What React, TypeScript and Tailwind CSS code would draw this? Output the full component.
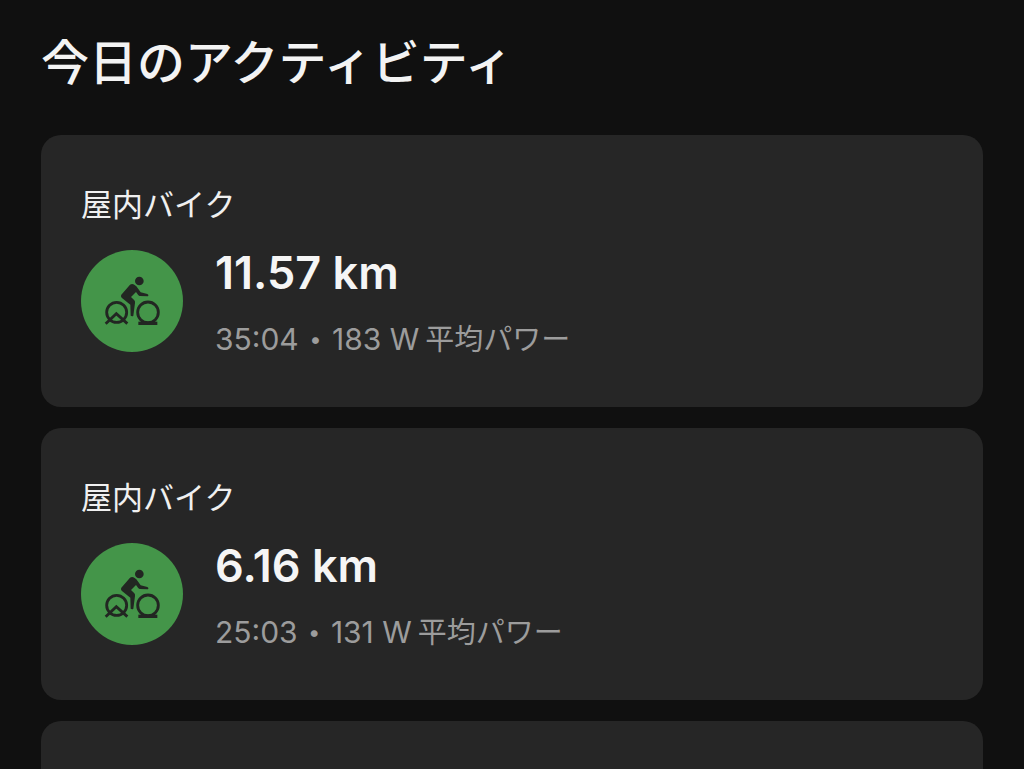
type Activity = {
  id: number;
  name: string;
  distance: string;
  duration: string;
  power: string;
};

const activities: Activity[] = [
  { id: 1, name: '屋内バイク', distance: '11.57 km', duration: '35:04', power: '183 W' },
  { id: 2, name: '屋内バイク', distance: '6.16 km', duration: '25:03', power: '131 W' },
];

function IndoorBikeIcon() {
  return (
    <svg viewBox="28 29 306 306" className="size-[102px] shrink-0" aria-hidden="true">
      <circle cx="181" cy="182" r="153" fill="#449549" />
      <g fill="none" stroke="#222622" strokeWidth="8.5">
        <circle cx="135" cy="216" r="30" />
        <circle cx="229" cy="216" r="31" />
        <path d="M102 250 L134 220 L167 250" />
        <path d="M200 249 H257" strokeWidth="10" />
      </g>
      <g fill="#222622">
        <circle cx="203" cy="122" r="13" />
        <path d="M175 133 Q182 129 189 134 L194 138 L207 156 L227 161 Q231 163 230 167 L228 168 L204 167 Q201 166 199 163 L193 155 L178 170 L188 180 Q191 183 190 188 L185 226 Q184 228 181 228 L177 226 L176 193 L150 172 Q146 168 149 163 Z" />
      </g>
    </svg>
  );
}

function ActivityCard({ activity }: { activity: Activity }) {
  return (
    <article className="shrink-0 rounded-[20px] bg-[#262626] px-10 pt-[50px] pb-[49px]">
      <h2 className="text-[31px] leading-10 text-[#f0f0f0]">{activity.name}</h2>
      <div className="mt-[25px] flex items-start gap-8">
        <IndoorBikeIcon />
        <div>
          <p className="text-[45px] leading-[46px] font-semibold text-[#f5f5f5]">{activity.distance}</p>
          <p className="mt-[25px] flex items-baseline gap-[6px] text-[30px] leading-9 text-[#9c9c9c]">
            <span>
              {activity.duration} <span className="px-[2px] align-[3px] text-[22px] leading-none">•</span> {activity.power}
            </span>
            <span className="text-[29px]">平均パワー</span>
          </p>
        </div>
      </div>
    </article>
  );
}

export default function App() {
  return (
    <main className="flex h-screen flex-col gap-[21px] overflow-hidden bg-[#101010] px-[41px] font-['Inter','Noto_Sans_CJK_JP',sans-serif]">
      <h1 className="mt-7 mb-4 text-[48px] leading-[70px] font-medium text-[#f3f3f3]">今日のアクティビティ</h1>
      {activities.map((activity) => (
        <ActivityCard key={activity.id} activity={activity} />
      ))}
      <div className="grow rounded-t-[20px] bg-[#262626]" />
    </main>
  );
}
